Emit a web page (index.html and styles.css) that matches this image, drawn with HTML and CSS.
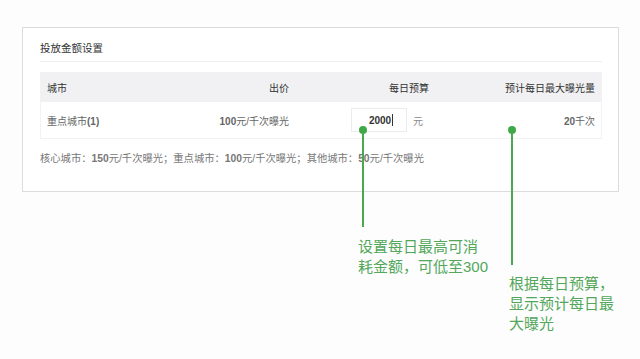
FILE: index.html
```html
<!DOCTYPE html>
<html lang="zh-CN">
<head>
    <meta charset="UTF-8">
    <meta name="viewport" content="width=device-width, initial-scale=1.0">
    <title>投放金额设置</title>
    <link rel="stylesheet" href="styles.css">
</head>
<body>
    <div class="canvas">
        <!-- 投放金额设置 card -->
        <div class="card">
            <h2 class="card-title">投放金额设置</h2>
            <div class="table">
                <div class="row head">
                    <div class="cell">城市</div>
                    <div class="cell right">出价</div>
                    <div class="cell right">每日预算</div>
                    <div class="cell right">预计每日最大曝光量</div>
                </div>
                <div class="row body">
                    <div class="cell">重点城市<span class="num">(1)</span></div>
                    <div class="cell right"><span class="num">100</span>元/千次曝光</div>
                    <div class="cell right budget">
                        <div class="budget-input"><span class="num">2000</span><span class="caret"></span></div>
                        <span class="unit">元</span>
                    </div>
                    <div class="cell right"><span class="num">20</span>千次</div>
                </div>
            </div>
            <p class="note">核心城市：<span class="num">150</span>元/千次曝光；重点城市：<span class="num">100</span>元/千次曝光；其他城市：<span class="num">50</span>元/千次曝光</p>
        </div>

        <!-- callouts -->
        <div class="callout callout-budget">
            <span class="dot"></span>
            <span class="stem"></span>
        </div>
        <p class="callout-text text-budget">设置每日最高可消<br>耗金额，可低至300</p>

        <div class="callout callout-reach">
            <span class="dot"></span>
            <span class="stem"></span>
        </div>
        <p class="callout-text text-reach">根据每日预算，<br>显示预计每日最<br>大曝光</p>
    </div>
</body>
</html>
```

FILE: styles.css
```css
body {
    margin: 0;
    background: #fdfdfd;
    font-family: "Liberation Sans", "Noto Sans CJK SC", sans-serif;
    color: #444;
}
.canvas {
    position: relative;
    width: 640px;
    height: 359px;
    padding: 27px 0 0 22px;
    box-sizing: border-box;
}
.card {
    width: 597px;
    height: 165px;
    box-sizing: border-box;
    border: 1px solid #dcdcdc;
    background: #fff;
    padding: 0 16px 0 17px;
}
.card-title {
    margin: 0;
    padding: 13px 0 6px 0;
    font-size: 10.5px;
    line-height: 14px;
    font-weight: normal;
    color: #333;
    border-bottom: 1px solid #eee;
}
.table {
    margin-top: 10px;
    border: 1px solid #f2f2f2;
    border-top: none;
}
.row {
    display: grid;
    grid-template-columns: 1fr 70px 140px 166px;
    align-items: center;
    padding: 0 6px 0 6px;
    font-size: 10px;
}
.row.head {
    height: 30px;
    background: #f1f1f3;
    color: #333;
}
.row.body {
    height: 36px;
    color: #666;
}
.cell.right {
    text-align: right;
}
.num {
    font-weight: bold;
}
.budget {
    display: flex;
    justify-content: flex-end;
    align-items: center;
}
.budget-input {
    width: 56px;
    height: 24px;
    box-sizing: border-box;
    border: 1px solid #ececec;
    display: flex;
    align-items: center;
    justify-content: center;
    padding-left: 4px;
    color: #333;
}
.caret {
    display: inline-block;
    width: 1px;
    height: 12px;
    background: #333;
    margin-left: 1px;
}
.unit {
    margin: 0 6px 0 6px;
    color: #888;
}
.note {
    margin: 13px 0 0 0;
    font-size: 10.3px;
    line-height: 14px;
    color: #777;
}

/* callouts over the card */
.callout {
    position: absolute;
    width: 8px;
}
.callout .dot {
    display: block;
    width: 8px;
    height: 8px;
    border-radius: 50%;
    background: #3fa847;
}
.callout .stem {
    display: block;
    width: 2px;
    margin: -2px auto 0;
    background: #4aa851;
}
.callout-budget {
    left: 359px;
    top: 126px;
}
.callout-budget .stem {
    height: 95px;
}
.callout-reach {
    left: 508px;
    top: 126px;
}
.callout-reach .stem {
    height: 133px;
}
.callout-text {
    position: absolute;
    margin: 0;
    font-size: 15px;
    line-height: 20px;
    color: #52a75a;
}
.text-budget {
    left: 358px;
    top: 237px;
}
.text-reach {
    left: 509px;
    top: 274px;
}
```
